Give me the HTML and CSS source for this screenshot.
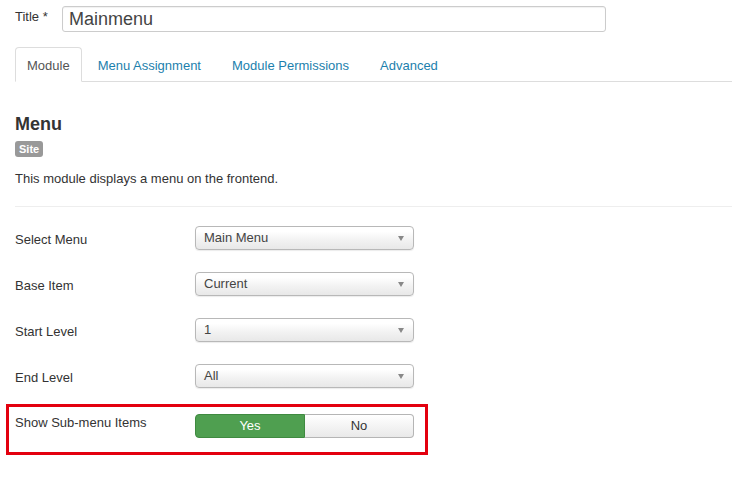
FILE: index.html
```html
<!DOCTYPE html>
<html lang="en">
<head>
    <meta charset="UTF-8">
    <meta name="viewport" content="width=device-width, initial-scale=1.0">
    <title>Module: Mainmenu</title>
    <link rel="stylesheet" href="styles.css">
</head>
<body>
    <div class="title-row">
        <label class="title-label">Title *</label>
        <input type="text" class="title-input" value="Mainmenu">
    </div>
    <div class="tabs">
        <a class="tab active">Module</a>
        <a class="tab">Menu Assignment</a>
        <a class="tab">Module Permissions</a>
        <a class="tab">Advanced</a>
    </div>
    <h3 class="heading">Menu</h3>
    <span class="badge">Site</span>
    <p class="desc">This module displays a menu on the frontend.</p>
    <hr class="sep">
    <div class="fields">
        <div class="row">
            <label class="label">Select Menu</label>
            <div class="select">Main Menu<span class="arrow"></span></div>
        </div>
        <div class="row">
            <label class="label">Base Item</label>
            <div class="select">Current<span class="arrow"></span></div>
        </div>
        <div class="row">
            <label class="label">Start Level</label>
            <div class="select">1<span class="arrow"></span></div>
        </div>
        <div class="row">
            <label class="label">End Level</label>
            <div class="select">All<span class="arrow"></span></div>
        </div>
    </div>
    <div class="highlight">
        <div class="row">
            <label class="label top">Show Sub-menu Items</label>
            <div class="toggle">
                <button class="btn yes">Yes</button>
                <button class="btn no">No</button>
            </div>
        </div>
    </div>
</body>
</html>
```

FILE: styles.css
```css
* {
    margin: 0;
    padding: 0;
    box-sizing: border-box;
}
body {
    font-family: "Liberation Sans", Arial, sans-serif;
    font-size: 13px;
    color: #333;
    background: #fff;
    padding: 6px 0 0 15px;
}
.title-row {
    display: flex;
}
.title-label {
    width: 47px;
    line-height: 22px;
}
.title-input {
    width: 544px;
    height: 26px;
    border: 1px solid #ccc;
    border-radius: 3px;
    font-family: "Liberation Sans", Arial, sans-serif;
    font-size: 18px;
    color: #444;
    padding: 0 6px;
    box-shadow: inset 0 1px 1px rgba(0,0,0,0.06);
}
.tabs {
    display: flex;
    margin-top: 15px;
    border-bottom: 1px solid #ddd;
}
.tab {
    display: block;
    height: 35px;
    line-height: 35px;
    padding: 0 13px;
    margin-right: 3px;
    margin-bottom: -1px;
    color: #1c7fad;
    border: 1px solid transparent;
    border-radius: 4px 4px 0 0;
}
.tab.active {
    color: #555;
    background: #fff;
    border-color: #ddd #ddd #fff;
    padding: 0 11px;
    margin-right: 2px;
}
.heading {
    margin-top: 32px;
    font-size: 18px;
    line-height: 20px;
    font-weight: bold;
    color: #333;
}
.badge {
    display: inline-block;
    margin-top: 7px;
    height: 16px;
    line-height: 16px;
    padding: 0 4px;
    background: #999;
    color: #fff;
    font-size: 11px;
    font-weight: bold;
    border-radius: 3px;
    vertical-align: top;
}
.desc {
    margin-top: 13px;
    line-height: 18px;
}
.sep {
    border: 0;
    border-top: 1px solid #eee;
    margin-top: 18px;
}
.fields {
    display: flex;
    flex-direction: column;
    gap: 22px;
    margin-top: 19px;
}
.row {
    display: flex;
    align-items: flex-start;
}
.label {
    width: 180px;
    line-height: 18px;
    padding-top: 5px;
}
.label.top {
    padding-top: 0;
}
.select {
    position: relative;
    width: 219px;
    height: 24px;
    line-height: 22px;
    padding: 0 8px;
    border: 1px solid #b8b8b8;
    border-radius: 4px;
    background: linear-gradient(#fff 20%, #f2f2f2 60%, #e8e8e8);
    box-shadow: 0 1px 1px rgba(0,0,0,0.08);
    font-size: 13px;
    color: #444;
}
.arrow {
    position: absolute;
    right: 9px;
    top: 9px;
    border-left: 3px solid transparent;
    border-right: 3px solid transparent;
    border-top: 5px solid #888;
}
.highlight {
    margin: 16px 0 0 -9px;
    width: 422px;
    border: 3px solid #e3000f;
    padding: 7px 0 14px 6px;
}
.toggle {
    display: flex;
    width: 219px;
    height: 24px;
}
.btn {
    flex: 1;
    font-family: "Liberation Sans", Arial, sans-serif;
    font-size: 13px;
    font-weight: normal;
    line-height: 22px;
    border: 1px solid #b5b5b5;
}
.btn.yes {
    flex: 0 0 110px;
    background: #4f9f50;
    border-color: #3f8a40;
    color: #fff;
    border-radius: 4px 0 0 4px;
}
.btn.no {
    background: linear-gradient(#fff, #e9e9e9);
    color: #333;
    border-left: 0;
    border-radius: 0 4px 4px 0;
}
```
